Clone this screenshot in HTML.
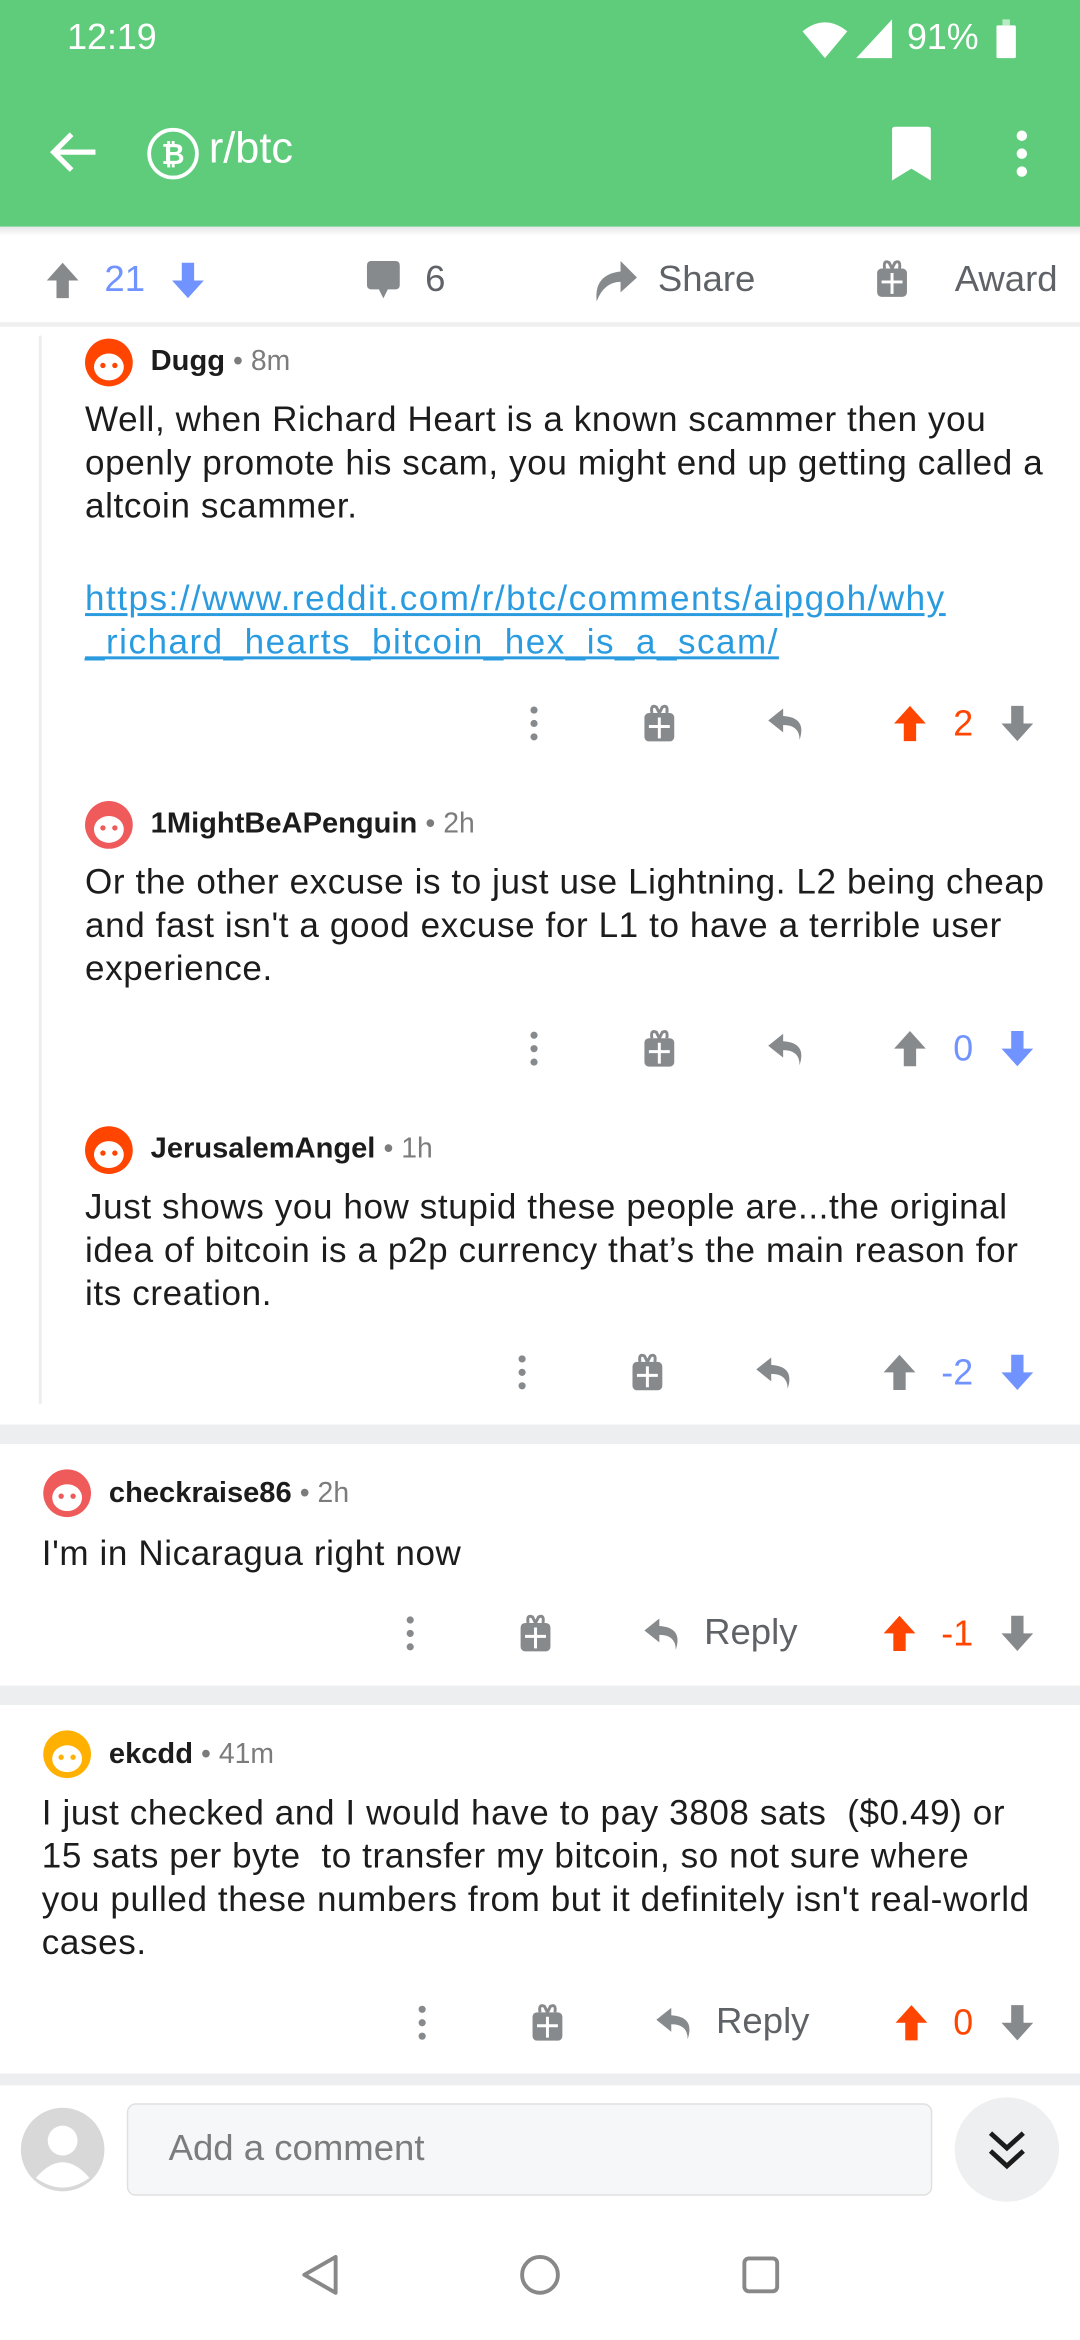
<!DOCTYPE html>
<html><head><meta charset="utf-8"><style>
*{margin:0;padding:0;box-sizing:border-box}
html,body{width:1080px;height:2340px;overflow:hidden;background:#fff}
#w{position:absolute;left:0;top:0;width:724px;height:1568px;transform:scale(1.49171);transform-origin:0 0;font-family:"Liberation Sans",sans-serif;color:#1a1a1b}
.a{position:absolute}
.t{font-size:23.5px;line-height:29px;letter-spacing:0.4px;color:#1c1c1c;white-space:nowrap}
.n{font-size:19.5px;font-weight:bold;color:#1c1c1c;white-space:nowrap}
.m{font-size:19px;color:#7c7c7c;font-weight:normal}
.g{color:#878a8c}
.sep{position:absolute;left:0;width:724px;height:13px;background:#edeef0}
svg{position:absolute;overflow:visible}
</style></head><body><div id="w">
<div class="a" style="left:0;top:0;width:724px;height:152px;background:#5fcc7c"></div>
<div class="a" style="left:45px;top:12px;font-size:24px;color:#fff">12:19</div>
<svg style="left:537px;top:13px" width="32" height="26" viewBox="0 0 32 26"><path d="M1 8 Q16 -4 31 8 L16 26 Z" fill="#fff"/></svg>
<svg style="left:574px;top:13px" width="24" height="26"><path d="M24 0 V26 H0 Z" fill="#fff"/></svg>
<div class="a" style="left:608px;top:12px;font-size:24px;color:#fff">91%</div>
<div class="a" style="left:668px;top:17px;width:13px;height:22px;background:#fff;border-radius:1px"></div>
<div class="a" style="left:672px;top:13px;width:5px;height:4px;background:#b8ebc5"></div>
<svg style="left:33px;top:88px" width="32" height="28" viewBox="0 0 32 28"><path d="M31 14 H4 M15 2 L3 14 L15 26" stroke="#fff" stroke-width="3.5" fill="none"/></svg>
<svg style="left:98px;top:85px" width="36" height="36"><circle cx="18" cy="18" r="16" stroke="#fff" stroke-width="2.5" fill="none"/><text x="18" y="25" font-size="19" font-weight="bold" fill="#fff" text-anchor="middle" font-family="Liberation Sans">₿</text></svg>
<div class="a" style="left:140px;top:84px;font-size:29px;color:#fff">r/btc</div>
<svg style="left:596px;top:85px" width="30" height="36"><path d="M2 2 Q2 0 4 0 H26 Q28 0 28 2 V36 L15 28 L2 36 Z" fill="#fff"/></svg>
<svg style="left:678px;top:86px" width="14" height="34"><circle cx="7" cy="5" r="3.5" fill="#fff"/><circle cx="7" cy="17" r="3.5" fill="#fff"/><circle cx="7" cy="29" r="3.5" fill="#fff"/></svg>

<div class="a" style="left:0;top:152px;width:724px;height:6px;background:linear-gradient(#e6e6e6,#fff)"></div>
<svg style="left:30px;top:175px" width="24" height="26" viewBox="0 0 20 22"><path d="M10 1 L19 11 H13.5 V21 H6.5 V11 H1 Z" fill="#878a8c"/></svg>
<div class="a" style="left:70px;top:174px;font-size:24.5px;color:#7193ff">21</div>
<svg style="left:114px;top:175px" width="24" height="26" viewBox="0 0 20 22"><path d="M10 21 L19 11 H13.5 V1 H6.5 V11 H1 Z" fill="#7193ff"/></svg>
<svg style="left:244px;top:175px" width="26" height="27"><path d="M2 3 Q2 0 5 0 H21 Q24 0 24 3 V16 Q24 19 21 19 H16 L13 25 L10 19 H5 Q2 19 2 16 Z" fill="#878a8c"/></svg>
<div class="a" style="left:285px;top:174px;font-size:24.5px;color:#5f6266">6</div>
<svg style="left:398px;top:172px" width="30" height="30"><path d="M2 30 Q0 12 18 10 V3 L29 14 L18 24 V17 Q7 17 2 30 Z" fill="#878a8c"/></svg>
<div class="a" style="left:441px;top:174px;font-size:24.5px;color:#5f6266">Share</div>
<svg style="left:587px;top:174px" width="22" height="26"><rect x="1" y="6" width="20" height="19" rx="3" fill="#878a8c"/><path d="M11 9 V23 M4 15 H18" stroke="#fff" stroke-width="2"/><path d="M6 6 Q5 0 9 2 L11 6 L13 2 Q17 0 16 6" fill="none" stroke="#878a8c" stroke-width="2"/></svg>
<div class="a" style="left:640px;top:174px;font-size:24.5px;color:#5f6266">Award</div>
<div class="a" style="left:0;top:216px;width:724px;height:3px;background:#efefef"></div>

<div class="a" style="left:26px;top:225px;width:2px;height:716px;background:#ededed"></div>

<!-- Dugg -->
<svg style="left:56px;top:226px" width="34" height="34"><circle cx="17" cy="17" r="16" fill="#ff4500"/><ellipse cx="17" cy="20" rx="10" ry="9" fill="#fff"/><circle cx="13" cy="19" r="1.8" fill="#ff4500"/><circle cx="21" cy="19" r="1.8" fill="#ff4500"/></svg>
<div class="a n" style="left:101px;top:231px">Dugg <span class="m">• 8m</span></div>
<div class="a t" style="left:57px;top:267px">Well, when Richard Heart is a known scammer then you<br>openly promote his scam, you might end up getting called a<br>altcoin scammer.</div>
<div class="a t" style="left:57px;top:387px;color:#2b9be0;text-decoration:underline;letter-spacing:1px">https://www.reddit.com/r/btc/comments/aipgoh/why<br>_richard_hearts_bitcoin_hex_is_a_scam/</div>

<svg style="left:354px;top:473px" width="8" height="24"><circle cx="4" cy="3" r="2.4" fill="#878a8c"/><circle cx="4" cy="12" r="2.4" fill="#878a8c"/><circle cx="4" cy="21" r="2.4" fill="#878a8c"/></svg>
<svg style="left:431px;top:472px" width="22" height="26"><rect x="1" y="6" width="20" height="19" rx="3" fill="#878a8c"/><path d="M11 9 V23 M4 15 H18" stroke="#fff" stroke-width="2"/><path d="M6 6 Q5 0 9 2 L11 6 L13 2 Q17 0 16 6" fill="none" stroke="#878a8c" stroke-width="2"/></svg>
<svg style="left:514px;top:474px" width="26" height="24"><path d="M11 1 L1 9 L11 17 V12 Q22 12 22 22 Q27 7 11 6 Z" fill="#878a8c"/></svg>
<svg style="left:598px;top:472px" width="24" height="26" viewBox="0 0 20 22"><path d="M10 1 L19 11 H13.5 V21 H6.5 V11 H1 Z" fill="#ff4500"/></svg>
<div class="a" style="left:639px;top:472px;font-size:24px;color:#ff4500">2</div>
<svg style="left:670px;top:472px" width="24" height="26" viewBox="0 0 20 22"><path d="M10 21 L19 11 H13.5 V1 H6.5 V11 H1 Z" fill="#878a8c"/></svg>

<!-- Penguin -->
<svg style="left:56px;top:536px" width="34" height="34"><circle cx="17" cy="17" r="16" fill="#ef5b5b"/><ellipse cx="17" cy="20" rx="10" ry="9" fill="#fff"/><circle cx="13" cy="19" r="1.8" fill="#ef5b5b"/><circle cx="21" cy="19" r="1.8" fill="#ef5b5b"/></svg>
<div class="a n" style="left:101px;top:541px">1MightBeAPenguin <span class="m">• 2h</span></div>
<div class="a t" style="left:57px;top:577px">Or the other excuse is to just use Lightning. L2 being cheap<br>and fast isn't a good excuse for L1 to have a terrible user<br>experience.</div>
<svg style="left:354px;top:691px" width="8" height="24"><circle cx="4" cy="3" r="2.4" fill="#878a8c"/><circle cx="4" cy="12" r="2.4" fill="#878a8c"/><circle cx="4" cy="21" r="2.4" fill="#878a8c"/></svg>
<svg style="left:431px;top:690px" width="22" height="26"><rect x="1" y="6" width="20" height="19" rx="3" fill="#878a8c"/><path d="M11 9 V23 M4 15 H18" stroke="#fff" stroke-width="2"/><path d="M6 6 Q5 0 9 2 L11 6 L13 2 Q17 0 16 6" fill="none" stroke="#878a8c" stroke-width="2"/></svg>
<svg style="left:514px;top:692px" width="26" height="24"><path d="M11 1 L1 9 L11 17 V12 Q22 12 22 22 Q27 7 11 6 Z" fill="#878a8c"/></svg>
<svg style="left:598px;top:690px" width="24" height="26" viewBox="0 0 20 22"><path d="M10 1 L19 11 H13.5 V21 H6.5 V11 H1 Z" fill="#878a8c"/></svg>
<div class="a" style="left:639px;top:690px;font-size:24px;color:#7193ff">0</div>
<svg style="left:670px;top:690px" width="24" height="26" viewBox="0 0 20 22"><path d="M10 21 L19 11 H13.5 V1 H6.5 V11 H1 Z" fill="#7193ff"/></svg>

<!-- Jerusalem -->
<svg style="left:56px;top:754px" width="34" height="34"><circle cx="17" cy="17" r="16" fill="#ff4500"/><ellipse cx="17" cy="20" rx="10" ry="9" fill="#fff"/><circle cx="13" cy="19" r="1.8" fill="#ff4500"/><circle cx="21" cy="19" r="1.8" fill="#ff4500"/></svg>
<div class="a n" style="left:101px;top:759px">JerusalemAngel <span class="m">• 1h</span></div>
<div class="a t" style="left:57px;top:795px">Just shows you how stupid these people are...the original<br>idea of bitcoin is a p2p currency that’s the main reason for<br>its creation.</div>
<svg style="left:346px;top:908px" width="8" height="24"><circle cx="4" cy="3" r="2.4" fill="#878a8c"/><circle cx="4" cy="12" r="2.4" fill="#878a8c"/><circle cx="4" cy="21" r="2.4" fill="#878a8c"/></svg>
<svg style="left:423px;top:907px" width="22" height="26"><rect x="1" y="6" width="20" height="19" rx="3" fill="#878a8c"/><path d="M11 9 V23 M4 15 H18" stroke="#fff" stroke-width="2"/><path d="M6 6 Q5 0 9 2 L11 6 L13 2 Q17 0 16 6" fill="none" stroke="#878a8c" stroke-width="2"/></svg>
<svg style="left:506px;top:909px" width="26" height="24"><path d="M11 1 L1 9 L11 17 V12 Q22 12 22 22 Q27 7 11 6 Z" fill="#878a8c"/></svg>
<svg style="left:591px;top:907px" width="24" height="26" viewBox="0 0 20 22"><path d="M10 1 L19 11 H13.5 V21 H6.5 V11 H1 Z" fill="#878a8c"/></svg>
<div class="a" style="left:631px;top:907px;font-size:24px;color:#7193ff">-2</div>
<svg style="left:670px;top:907px" width="24" height="26" viewBox="0 0 20 22"><path d="M10 21 L19 11 H13.5 V1 H6.5 V11 H1 Z" fill="#7193ff"/></svg>

<div class="sep" style="top:955px"></div>

<!-- checkraise -->
<svg style="left:28px;top:984px" width="34" height="34"><circle cx="17" cy="17" r="16" fill="#ef5b5b"/><ellipse cx="17" cy="20" rx="10" ry="9" fill="#fff"/><circle cx="13" cy="19" r="1.8" fill="#ef5b5b"/><circle cx="21" cy="19" r="1.8" fill="#ef5b5b"/></svg>
<div class="a n" style="left:73px;top:990px">checkraise86 <span class="m">• 2h</span></div>
<div class="a t" style="left:28px;top:1027px">I'm in Nicaragua right now</div>
<svg style="left:271px;top:1083px" width="8" height="24"><circle cx="4" cy="3" r="2.4" fill="#878a8c"/><circle cx="4" cy="12" r="2.4" fill="#878a8c"/><circle cx="4" cy="21" r="2.4" fill="#878a8c"/></svg>
<svg style="left:348px;top:1082px" width="22" height="26"><rect x="1" y="6" width="20" height="19" rx="3" fill="#878a8c"/><path d="M11 9 V23 M4 15 H18" stroke="#fff" stroke-width="2"/><path d="M6 6 Q5 0 9 2 L11 6 L13 2 Q17 0 16 6" fill="none" stroke="#878a8c" stroke-width="2"/></svg>
<svg style="left:431px;top:1084px" width="26" height="24"><path d="M11 1 L1 9 L11 17 V12 Q22 12 22 22 Q27 7 11 6 Z" fill="#878a8c"/></svg>
<div class="a" style="left:472px;top:1081px;font-size:24.5px;color:#5f6266">Reply</div>
<svg style="left:591px;top:1082px" width="24" height="26" viewBox="0 0 20 22"><path d="M10 1 L19 11 H13.5 V21 H6.5 V11 H1 Z" fill="#ff4500"/></svg>
<div class="a" style="left:631px;top:1082px;font-size:24px;color:#ff4500">-1</div>
<svg style="left:670px;top:1082px" width="24" height="26" viewBox="0 0 20 22"><path d="M10 21 L19 11 H13.5 V1 H6.5 V11 H1 Z" fill="#878a8c"/></svg>

<div class="sep" style="top:1130px"></div>

<!-- ekcdd -->
<svg style="left:28px;top:1159px" width="34" height="34"><circle cx="17" cy="17" r="16" fill="#ffb000"/><ellipse cx="17" cy="20" rx="10" ry="9" fill="#fff"/><circle cx="13" cy="19" r="1.8" fill="#ffb000"/><circle cx="21" cy="19" r="1.8" fill="#ffb000"/></svg>
<div class="a n" style="left:73px;top:1165px">ekcdd <span class="m">• 41m</span></div>
<div class="a t" style="left:28px;top:1201px">I just checked and I would have to pay 3808 sats&nbsp; ($0.49) or<br>15 sats per byte&nbsp; to transfer my bitcoin, so not sure where<br>you pulled these numbers from but it definitely isn't real-world<br>cases.</div>
<svg style="left:279px;top:1344px" width="8" height="24"><circle cx="4" cy="3" r="2.4" fill="#878a8c"/><circle cx="4" cy="12" r="2.4" fill="#878a8c"/><circle cx="4" cy="21" r="2.4" fill="#878a8c"/></svg>
<svg style="left:356px;top:1343px" width="22" height="26"><rect x="1" y="6" width="20" height="19" rx="3" fill="#878a8c"/><path d="M11 9 V23 M4 15 H18" stroke="#fff" stroke-width="2"/><path d="M6 6 Q5 0 9 2 L11 6 L13 2 Q17 0 16 6" fill="none" stroke="#878a8c" stroke-width="2"/></svg>
<svg style="left:439px;top:1345px" width="26" height="24"><path d="M11 1 L1 9 L11 17 V12 Q22 12 22 22 Q27 7 11 6 Z" fill="#878a8c"/></svg>
<div class="a" style="left:480px;top:1342px;font-size:24.5px;color:#5f6266">Reply</div>
<svg style="left:599px;top:1343px" width="24" height="26" viewBox="0 0 20 22"><path d="M10 1 L19 11 H13.5 V21 H6.5 V11 H1 Z" fill="#ff4500"/></svg>
<div class="a" style="left:639px;top:1343px;font-size:24px;color:#ff4500">0</div>
<svg style="left:670px;top:1343px" width="24" height="26" viewBox="0 0 20 22"><path d="M10 21 L19 11 H13.5 V1 H6.5 V11 H1 Z" fill="#878a8c"/></svg>

<div class="sep" style="top:1390px;height:8px"></div>
<div class="a" style="left:0;top:1398px;width:724px;height:170px;background:#fff"></div>
<svg style="left:14px;top:1413px" width="56" height="56"><circle cx="28" cy="28" r="28" fill="#d8d8d8"/><circle cx="28" cy="22" r="10" fill="#fff"/><path d="M10 47 Q28 26 46 47 Q28 60 10 47 Z" fill="#fff"/></svg>
<div class="a" style="left:85px;top:1410px;width:540px;height:62px;background:#f6f7f8;border:1px solid #e0e0e0;border-radius:6px"></div>
<div class="a" style="left:113px;top:1427px;font-size:24.5px;color:#7c7c7c">Add a comment</div>
<div class="a" style="left:640px;top:1406px;width:70px;height:70px;border-radius:35px;background:#eeeff0"></div>
<svg style="left:662px;top:1428px" width="26" height="28"><path d="M2 2 L13 12 L24 2 M2 14 L13 24 L24 14" stroke="#1c1c1c" stroke-width="3.2" fill="none"/></svg>

<svg style="left:200px;top:1510px" width="30" height="30"><path d="M25 3 V27 L4 15 Z" stroke="#888" stroke-width="2.6" fill="none" stroke-linejoin="round"/></svg>
<svg style="left:347px;top:1510px" width="30" height="30"><circle cx="15" cy="15" r="12" stroke="#888" stroke-width="2.6" fill="none"/></svg>
<svg style="left:496px;top:1511px" width="28" height="28"><rect x="3" y="3" width="22" height="22" rx="3" stroke="#888" stroke-width="2.6" fill="none"/></svg>
</div></body></html>
